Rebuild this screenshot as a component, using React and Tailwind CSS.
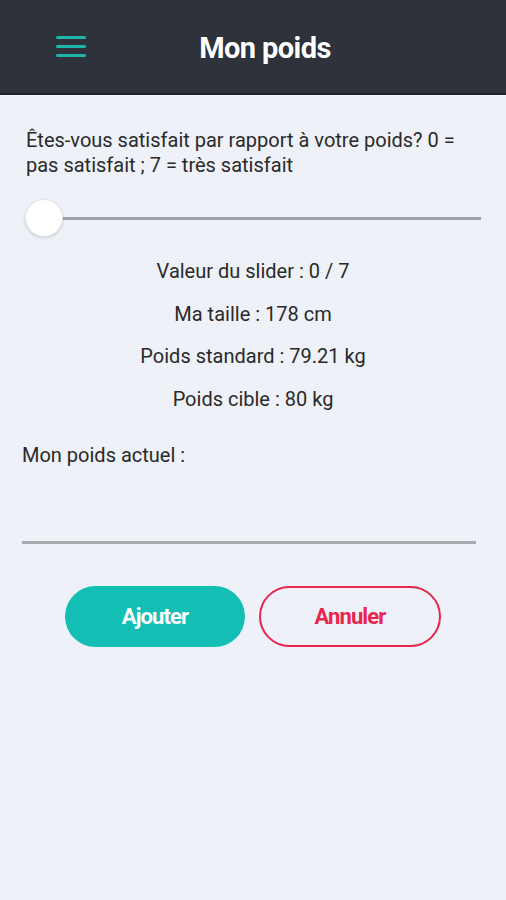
export default function App() {
  const lines = [
    'Valeur du slider : 0 / 7',
    'Ma taille : 178 cm',
    'Poids standard : 79.21 kg',
    'Poids cible : 80 kg',
  ]

  return (
    <div className="min-h-[900px] bg-[#eef1f7] font-['Roboto',sans-serif] text-[#2a2a2a]">
      {/* Header */}
      <div className="flex h-[95px] items-center bg-[#2d323b] border-b-2 border-[#20242b] pl-[56px]">
        <div className="flex w-[30px] shrink-0 flex-col gap-[6px]">
          <span className="h-[3px] rounded bg-[#1fb5ad]" />
          <span className="h-[3px] rounded bg-[#1fb5ad]" />
          <span className="h-[3px] rounded bg-[#1fb5ad]" />
        </div>
        <h1 className="flex-1 pr-[62px] pt-[4px] text-center text-[29px] font-bold tracking-[-0.6px] text-white">
          Mon poids
        </h1>
      </div>

      {/* Question */}
      <p className="px-[26px] pt-[33px] text-[20px] leading-[25px]">
        Êtes-vous satisfait par rapport à votre poids? 0 = pas satisfait ; 7 = très satisfait
      </p>

      {/* Slider */}
      <div className="mt-[20px] flex h-[40px] items-center pl-[25px] pr-[25px]">
        <div className="relative flex flex-1 items-center">
          <div className="ml-[36px] h-[3px] flex-1 bg-[#9da0a5]" />
          <div className="absolute left-0 top-1/2 h-[38px] w-[38px] -translate-y-1/2 rounded-full border border-[#e3e5e9] bg-white shadow-[0_1px_3px_rgba(0,0,0,0.15)]" />
        </div>
      </div>

      {/* Infos */}
      <div className="mt-[21px] flex flex-col items-center gap-[17.5px] text-[20px] leading-[25px]">
        {lines.map((l, i) => (
          <div key={i}>{l}</div>
        ))}
      </div>

      {/* Input */}
      <div className="px-[22px] pt-[31px]">
        <div className="text-[20px] leading-[25px]">Mon poids actuel :</div>
        <div className="mt-[73px] h-[3px] w-[454px] bg-[#a9abaf]" />
      </div>

      {/* Buttons */}
      <div className="mt-[42px] flex justify-center gap-[14px]">
        <button className="h-[61px] w-[180px] rounded-full bg-[#13bfb4] text-[22px] font-bold tracking-[-0.9px] text-white">
          Ajouter
        </button>
        <button className="h-[61px] w-[182px] rounded-full border-2 border-[#e8254d] text-[22px] font-bold tracking-[-0.9px] text-[#e8254d]">
          Annuler
        </button>
      </div>
    </div>
  )
}
